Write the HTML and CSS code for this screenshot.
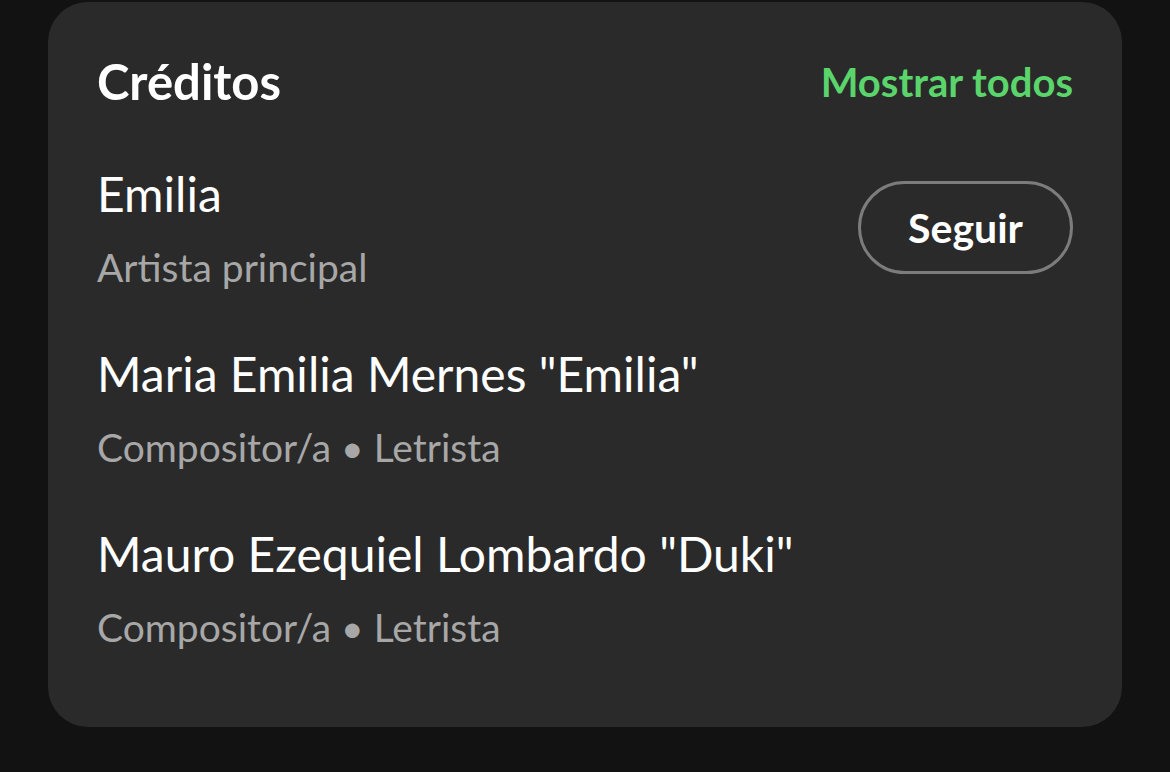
FILE: index.html
```html
<!DOCTYPE html>
<html lang="es">
<head>
<meta charset="utf-8">
<title>Créditos</title>
<link rel="stylesheet" href="styles.css">
</head>
<body>
<section class="card">
  <header class="card-header">
    <h2 class="title">Créditos</h2>
    <a class="show-all" href="#">Mostrar todos</a>
  </header>
  <ul class="credits">
    <li class="credit">
      <div class="credit-info">
        <div class="name">Emilia</div>
        <div class="role">Artista principal</div>
      </div>
      <button class="follow">Seguir</button>
    </li>
    <li class="credit">
      <div class="credit-info">
        <div class="name">Maria Emilia Mernes "Emilia"</div>
        <div class="role">Compositor/a • Letrista</div>
      </div>
    </li>
    <li class="credit">
      <div class="credit-info">
        <div class="name">Mauro Ezequiel Lombardo "Duki"</div>
        <div class="role">Compositor/a • Letrista</div>
      </div>
    </li>
  </ul>
</section>
</body>
</html>
```
FILE: styles.css
```css
html, body {
  margin: 0;
  padding: 0;
  background: #121212;
  height: 100%;
}
body {
  font-family: "Lato", "Liberation Sans", sans-serif;
  color: #ffffff;
  padding-top: 2px;
  box-sizing: border-box;
}
.card {
  margin-left: 48px;
  width: 1074px;
  box-sizing: border-box;
  background: #2a2a2a;
  border-radius: 40px;
  padding: 47px 49px 76px 49px;
}
.card-header {
  display: flex;
  justify-content: space-between;
  align-items: baseline;
  height: 64px;
}
.title {
  margin: 0;
  font-size: 49px;
  line-height: 64px;
  font-weight: 700;
}
.show-all {
  font-size: 40px;
  line-height: 64px;
  font-weight: 700;
  color: #5ad46b;
  text-decoration: none;
  position: relative;
  top: -3px;
}
.credits {
  list-style: none;
  margin: 51px 0 0;
  padding: 0;
  display: flex;
  flex-direction: column;
  gap: 53px;
}
.credit {
  display: flex;
  justify-content: space-between;
  align-items: center;
}
.name {
  font-size: 48px;
  line-height: 60px;
  color: #ffffff;
}
.role {
  margin-top: 19px;
  font-size: 39px;
  line-height: 48px;
  color: #a7a7a7;
}
.follow {
  width: 215px;
  height: 93px;
  border: 3px solid #7c7c7c;
  border-radius: 47px;
  background: transparent;
  color: #ffffff;
  font-family: inherit;
  font-size: 41px;
  font-weight: 700;
  padding: 0;
}
```
